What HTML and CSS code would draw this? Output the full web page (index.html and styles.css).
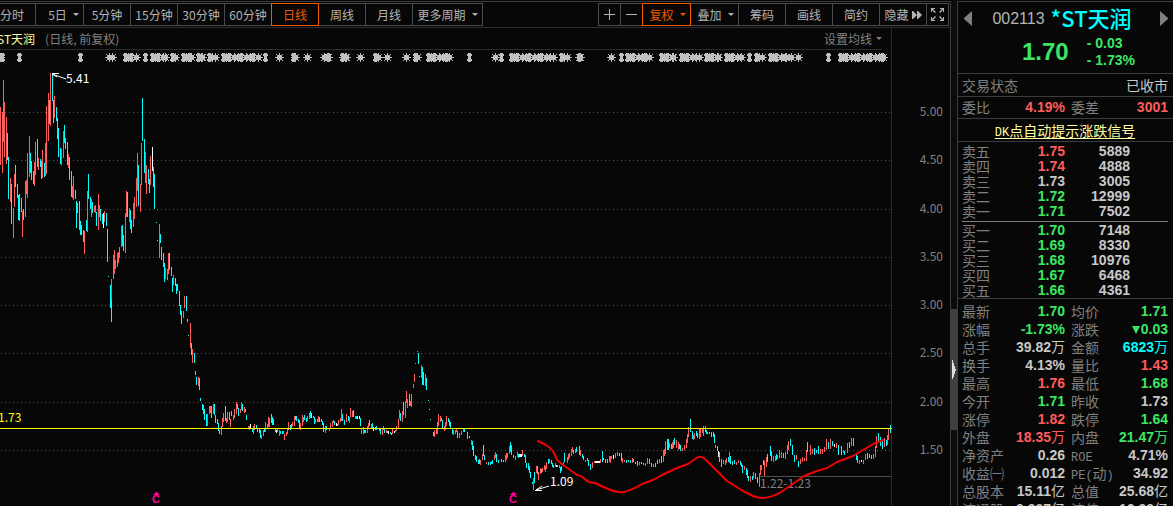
FILE: index.html
```html
<!DOCTYPE html>
<html lang="zh-CN">
<head>
<meta charset="utf-8">
<title>*ST天润 002113</title>
<link rel="stylesheet" href="styles.css">
</head>
<body>
<div class="app">
  <main class="chart-panel">
    <nav class="toolbar">
      <div class="group group-left">
        <button class="tab">分时</button>
        <button class="tab tab-menu">5日<span class="caret"></span></button>
        <button class="tab">5分钟</button>
        <button class="tab">15分钟</button>
        <button class="tab">30分钟</button>
        <button class="tab">60分钟</button>
        <button class="tab active">日线</button>
        <button class="tab">周线</button>
        <button class="tab">月线</button>
        <button class="tab tab-more">更多周期<span class="caret"></span></button>
      </div>
      <div class="group">
        <button class="tab tab-icon" aria-label="放大"><svg width="11" height="11" viewBox="0 0 11 11"><path d="M0 5h11v1H0zM5 0h1v11H5z"/></svg></button>
        <button class="tab tab-icon" aria-label="缩小"><svg width="11" height="11" viewBox="0 0 11 11"><path d="M0 5h11v1H0z"/></svg></button>
        <button class="tab tab-drop active">复权<span class="caret"></span></button>
        <button class="tab tab-drop">叠加<span class="caret"></span></button>
        <button class="tab">筹码</button>
        <button class="tab">画线</button>
        <button class="tab">简约</button>
        <button class="tab tab-hide">隐藏<svg width="10" height="8" viewBox="0 0 10 8"><path d="M0 0h1l4 4-4 4H0zM5 0h1l4 4-4 4H5z"/></svg></button>
        <button class="tab tab-icon" aria-label="全屏"><svg width="13" height="13" viewBox="0 0 13 13"><path d="M0 0h4v1H2l3 3-1 1-3-3v2H0zM13 0v4h-1V2L9 5 8 4l3-3H9V0zM0 13V9h1v2l3-3 1 1-3 3h2v1zM13 13H9v-1h2L8 9l1-1 3 3V9h1z"/></svg></button>
      </div>
    </nav>
    <div class="info">
      <div class="info-bar">
        <span class="info-name">ST天润</span>
        <span class="info-period">(日线, 前复权)</span>
        <button class="ma-button">设置均线<span class="caret"></span></button>
      </div>
    </div>
    <svg class="chart" viewBox="0 50 950 456" role="img" aria-label="日线走势图">
      <path class="grid" d="M1 112.5H893M1 160.5H893M1 209.5H893M1 257.5H893M1 305.5H893M1 353.5H893M1 402.5H893M1 450.5H893"/>
      <path class="axis-line" d="M891 50h1v456h-1z"/>
      <g class="axis">
        <text x="943" y="116">5.00</text><text x="943" y="164">4.50</text><text x="943" y="213">4.00</text><text x="943" y="261">3.50</text>
        <text x="943" y="309">3.00</text><text x="943" y="357">2.50</text><text x="943" y="406">2.00</text><text x="943" y="454">1.50</text>
      </g>
      <path id="events" class="events"/>
      <path id="up" class="up"/>
      <path id="down" class="down"/>
      <path id="flat" class="flat"/>
      <path class="support" d="M760 476h131v1H760z"/>
      <text class="support-text" x="760" y="488">1.22-1.23</text>
      <path class="price-line" d="M0 428h892v1H0z"/>
      <text class="price-text" x="-2" y="422">1.73</text>
      <path class="arrow" d="M52 74L66 79M52 73.5h7M52 74l5 3M536 490L549 486M535 490.5h7M536 490l6-4"/>
      <text class="mark" x="66" y="83">5.41</text>
      <text class="mark" x="550" y="486">1.09</text>
      <path class="wave" d="M538 441L546 445Q552 449 554 453L557 460L563 465L573 472L577 475Q581 475 587 481Q591 483 595 483L608 489Q618 493 624 492Q632 490 642 484L653 480L662 475L677 468L688 464L698 457Q702 456 705 459L712 466L727 481L743 491L753 496Q758 498 763 498Q775 497 784 490L797 481L804 476L817 471L827 468L837 462L853 456L863 450L875 443L883 440"/>
      <g class="badge">
        <path d="M156 492h1l3 3h-7zM513 492h1l3 3h-7z"/>
        <text x="156" y="503">C</text><text x="513" y="503">C</text>
      </g>
    </svg>
  </main>
  <div class="splitter"><button class="thumb" aria-label="收起侧栏"><svg width="4" height="19" viewBox="0 0 4 19"><path d="M0 0h1v3h1v3h1v3h1v2H3v3H2v3H1v2H0z"/></svg></button></div>
  <aside class="side">
    <header class="quote">
      <div class="quote-title">
        <button class="nav-button" aria-label="上一只"><svg width="8" height="15" viewBox="0 0 8 15"><path d="M8 0v15L0 8V7z"/></svg></button>
        <h1 class="stock"><span class="code">002113</span><span class="name">*ST天润</span></h1>
        <button class="nav-button" aria-label="下一只"><svg width="8" height="15" viewBox="0 0 8 15"><path d="M0 0v15l8-7V7z"/></svg></button>
      </div>
      <div class="quote-price"><span class="last">1.70</span><span class="change">- 0.03<br>- 1.73%</span></div>
    </header>
    <div class="line status"><span>交易状态</span><span class="status-value">已收市</span></div>
    <table class="pairs ratio"><tr><th>委比</th><td class="r">4.19%</td><th>委差</th><td class="r">3001</td></tr></table>
    <div class="line promo"><a href="#"><span class="latin">DK</span>点自动提示涨跌信号</a></div>
    <div class="book">
      <table class="asks">
        <tr><th>卖五</th><td class="r">1.75</td><td>5889</td></tr>
        <tr><th>卖四</th><td class="r">1.74</td><td>4888</td></tr>
        <tr><th>卖三</th><td>1.73</td><td>3005</td></tr>
        <tr><th>卖二</th><td class="g">1.72</td><td>12999</td></tr>
        <tr><th>卖一</th><td class="g">1.71</td><td>7502</td></tr>
      </table>
      <table class="bids">
        <tr><th>买一</th><td class="g">1.70</td><td>7148</td></tr>
        <tr><th>买二</th><td class="g">1.69</td><td>8330</td></tr>
        <tr><th>买三</th><td class="g">1.68</td><td>10976</td></tr>
        <tr><th>买四</th><td class="g">1.67</td><td>6468</td></tr>
        <tr><th>买五</th><td class="g">1.66</td><td>4361</td></tr>
      </table>
    </div>
    <table class="pairs details">
      <tr><th>最新</th><td class="g">1.70</td><th>均价</th><td class="g">1.71</td></tr>
      <tr><th>涨幅</th><td class="g">-1.73%</td><th>涨跌</th><td class="g"><span class="fall"></span>0.03</td></tr>
      <tr><th>总手</th><td>39.82<i>万</i></td><th>金额</th><td class="c">6823<i>万</i></td></tr>
      <tr><th>换手</th><td>4.13%</td><th>量比</th><td class="r">1.43</td></tr>
      <tr><th>最高</th><td class="r">1.76</td><th>最低</th><td class="g">1.68</td></tr>
      <tr><th>今开</th><td class="g">1.71</td><th>昨收</th><td>1.73</td></tr>
      <tr><th>涨停</th><td class="r">1.82</td><th>跌停</th><td class="g">1.64</td></tr>
      <tr><th>外盘</th><td class="r">18.35<i>万</i></td><th>内盘</th><td class="g">21.47<i>万</i></td></tr>
      <tr><th>净资产</th><td>0.26</td><th><span class="latin">ROE</span></th><td>4.71%</td></tr>
      <tr><th>收益㈠</th><td>0.012</td><th><span class="latin">PE(</span>动<span class="latin">)</span></th><td>34.92</td></tr>
      <tr><th>总股本</th><td>15.11<i>亿</i></td><th>总值</th><td>25.68<i>亿</i></td></tr>
      <tr><th>流通股</th><td>9.997<i>亿</i></td><th>流值</th><td>16.99<i>亿</i></td></tr>
    </table>
  </aside>
</div>
<script src="chart.js"></script>
</body>
</html>
```
FILE: styles.css
```css
* { box-sizing: border-box; }
body {
  margin: 0;
  height: 100vh;
  overflow: hidden;
  background: #070707;
  color: #c8c8c8;
  font: 12px/16px "Noto Sans CJK SC", sans-serif;
}
button {
  margin: 0;
  padding: 0;
  border: 0;
  background: none;
  color: inherit;
  font: inherit;
  white-space: nowrap;
}
svg { display: block; fill: currentColor; }
.app { display: flex; height: 100%; padding-top: 1px; overflow: hidden; }

.chart-panel { flex: 1; min-width: 0; border-top: 1px solid #3c3c3c; }
.toolbar {
  display: flex;
  justify-content: space-between;
  padding: 1px 1px 1px 0;
  border-bottom: 1px solid #2c2c2c;
  overflow: hidden;
}
.group { display: flex; }
.group-left { margin-left: -11px; }
.tab {
  display: flex;
  align-items: center;
  justify-content: center;
  gap: 6px;
  width: 48px;
  height: 23px;
  margin-left: -1px;
  border: 1px solid #4b4b4b;
  color: #b4b4b4;
}
.tab-menu { width: 49px; padding-left: 8px; }
.tab-drop { width: 49px; padding-left: 2px; }
.tab-more { width: 71px; }
.tab-icon { width: 23px; }
.tab-hide { gap: 3px; }
.tab.active { position: relative; border-color: #f25a00; color: #f25a00; }
.caret {
  border: 3px solid transparent;
  border-top-color: currentColor;
  border-bottom: 0;
}
.info { margin-right: 58px; border-right: 1px solid #2c2c2c; }
.info-bar {
  display: flex;
  align-items: center;
  height: 22px;
  margin-right: 9px;
  border-bottom: 1px solid #2c2c2c;
}
.info-name { margin-left: -3px; color: #ffffa0; }
.info-period { margin-left: 10px; color: #808080; }
.ma-button { display: flex; align-items: center; gap: 4px; margin-left: auto; color: #808080; }

.chart { width: 100%; height: auto; font-size: 12px; }
.grid { fill: none; stroke: #505050; stroke-dasharray: 1 3; shape-rendering: crispEdges; }
.axis-line { fill: #2c2c2c; }
.axis { fill: #808080; text-anchor: end; }
.events { fill: #c0c0c0; shape-rendering: crispEdges; }
.up { fill: #ff5c5c; shape-rendering: crispEdges; }
.down { fill: #00ffff; shape-rendering: crispEdges; }
.flat { fill: #ffffff; shape-rendering: crispEdges; }
.support { fill: #505050; }
.support-text { fill: #808080; }
.price-line { fill: #ffff00; }
.price-text { fill: #ffff00; }
.arrow { fill: none; stroke: #ffffff; }
.mark { fill: #ffffff; }
.wave { fill: none; stroke: #f00000; stroke-width: 2; stroke-linejoin: round; stroke-linecap: round; }
.badge { fill: #ff0096; font: bold 11px "Liberation Sans", sans-serif; text-anchor: middle; }

.splitter { width: 7px; padding-top: 308px; border-left: 1px solid #3c3c3c; background: #0c0c0c; }
.thumb {
  display: flex;
  align-items: center;
  justify-content: center;
  width: 6px;
  height: 121px;
  background: #404040;
  color: #e0e0e0;
}

.side { width: 216px; border: 1px solid #3c3c3c; border-width: 1px 0 0 1px; font-size: 14px; }
.quote { padding-bottom: 4px; border-bottom: 1px solid #3c3c3c; }
.quote-title {
  display: flex;
  align-items: center;
  justify-content: space-between;
  height: 33px;
  padding: 0 5px 0 6px;
}
.nav-button { color: #808080; }
.stock { display: flex; align-items: center; gap: 6px; margin: 0; padding-right: 8px; font-weight: normal; }
.code { color: #b4b4b4; font: 16px/32px "Liberation Sans", sans-serif; }
.name { padding-bottom: 4px; color: #00ffff; font-size: 22px; font-weight: 500; line-height: 28px; }
.quote-price {
  display: flex;
  align-items: center;
  gap: 18px;
  padding-left: 64px;
  color: #3ce664;
  font-family: "Liberation Sans", sans-serif;
  font-weight: bold;
}
.last { font-size: 24px; line-height: 34px; }
.change { font-size: 14px; line-height: 17px; }
.line {
  display: flex;
  align-items: center;
  justify-content: space-between;
  height: 23px;
  padding: 0 5px 0 4px;
  border-bottom: 1px solid #3c3c3c;
  color: #808080;
}
.status-value { color: #c8c8c8; }
.promo { justify-content: center; }
.promo a { color: #ffffa0; text-underline-offset: 2px; }
.latin { font-family: "Liberation Mono", monospace; font-size: 12px; line-height: 1px; }

table { width: 100%; border-collapse: separate; border-spacing: 0; table-layout: fixed; }
th, td { padding: 0; white-space: nowrap; }
th { color: #808080; font-weight: normal; text-align: left; }
td { font-family: "Liberation Sans", "Noto Sans CJK SC", sans-serif; font-weight: bold; text-align: right; }
td i { font-style: normal; font-weight: normal; line-height: 1px; }
.r { color: #ff5c5c; }
.g { color: #3ce664; }
.c { color: #00ffff; }
.pairs { padding: 0 5px 0 4px; }
.pairs th { width: 47px; padding-left: 6px; }
.pairs th:first-child { width: 42px; padding-left: 0; }
.pairs td { width: 61px; }
.pairs td:last-child { width: auto; }
.ratio { border-bottom: 1px solid #3c3c3c; line-height: 21px; }
.book { padding: 2px 5px 0 4px; border-bottom: 1px solid #3c3c3c; line-height: 15px; }
.book th { width: 42px; }
.book td { width: 61px; }
.book td:last-child { width: auto; padding-right: 38px; }
.asks { padding-bottom: 2px; border-bottom: 1px solid #808080; }
.bids { padding-top: 1px; }
.details { padding-top: 3px; line-height: 18px; }
.details th, .details td { height: 18px; vertical-align: top; }
.fall {
  display: inline-block;
  margin-right: 1px;
  border: 4px solid transparent;
  border-top: 8px solid currentColor;
  border-bottom: 0;
}
```
FILE: chart.js
```js
// Daily bars: x, top, bottom
const up = `0,107,165 2,112,173 3,80,142 4,102,157 6,117,164 10,178,202 13,208,238 14,174,207 22,211,237 25,181,217 26,180,194 27,153,198 29,136,177 34,162,186 35,142,175 38,158,170 42,150,178 45,143,176 46,106,174 48,93,141 50,73,126 54,96,118 61,149,165 63,131,158 68,154,168 72,186,198 73,176,200 84,231,254 87,191,232 91,199,217 94,206,212 95,205,213 98,194,230 99,205,217 104,211,222
111,279,300 113,255,279 114,250,274 115,260,269 117,253,267 118,252,263 119,247,258 121,226,247 125,213,253 126,191,217 129,208,222 133,203,227 134,197,219 136,178,207 137,153,191 140,184,212 141,143,185 145,152,183 146,165,194 150,156,185 159,224,258 165,268,279 167,269,280 168,253,274 173,275,285 183,311,318 184,296,308 190,323,348 192,349,363 198,377,386
207,414,426 209,406,414 210,406,413 213,404,414 221,426,435 222,418,427 223,413,422 226,418,423 227,412,422 230,419,427 233,415,420 234,409,418 236,402,414 240,409,413 241,402,410 244,407,413 248,426,428 249,426,430 253,426,434 254,424,430 261,435,439 263,430,436 265,422,432 267,424,428 268,417,427 269,418,427 277,429,432 279,430,436 283,431,434 284,434,440 286,432,436 287,429,434 288,422,430 292,422,426 294,416,426
300,423,430 302,415,426 303,417,422 307,416,421 309,413,419 315,419,423 318,416,422 325,426,433 329,428,431 330,423,429 332,421,427 333,420,423 338,420,425 340,418,422 341,409,421 346,414,422 349,417,423 350,408,417 352,411,417 355,416,419 361,429,434 363,427,434 367,426,433 368,423,428 371,424,428 382,428,435 383,426,430 386,430,433 392,428,434 395,430,432 396,426,431 398,419,428 399,410,419
402,411,422 405,401,418 406,391,403 407,399,408 410,401,406 411,394,407 413,384,388 414,374,382 415,363,364 417,351,352 421,365,378 425,374,386 434,430,437 436,428,434 437,422,434 438,414,426 440,416,422 444,426,431 445,422,430 446,416,426 453,430,435 455,430,434 456,428,432 459,433,438 461,431,435 463,429,432 471,440,445 480,460,465 482,454,460 486,462,464 491,461,464 494,455,460 495,452,458
505,455,462 506,453,460 507,453,458 509,446,454 515,456,460 517,452,457 522,450,456 533,478,490 536,466,473 538,472,480 540,468,474 542,468,472 544,465,470 545,466,472 546,462,469 549,459,463 555,463,467 559,465,468 563,462,465 567,457,463 568,454,460 569,453,458 571,449,456 572,447,452 575,449,453 580,450,456 585,460,462 592,462,468 594,461,463
600,459,463 609,456,462 610,456,463 611,456,459 615,453,458 617,452,456 622,458,463 624,460,462 632,458,463 639,462,465 645,463,466 647,458,464 653,464,467 659,459,463 663,450,462 664,449,456 665,441,454 669,443,448 672,442,449 673,440,448 676,440,448 678,442,450 682,448,451 684,445,450 686,439,448 687,434,443 688,427,437 693,435,440 694,433,439 699,429,439 700,429,437 702,428,433 703,426,436
715,445,448 723,460,464 725,460,465 726,458,463 729,452,463 736,462,465 738,460,463 744,466,470 750,476,482 753,472,478 759,473,487 760,465,475 761,465,470 764,461,476 766,457,467 773,456,462 775,456,461 777,455,459 779,450,458 781,452,458 785,452,459 787,445,454 788,441,450 796,455,460 800,459,464 802,457,462 804,458,461 806,450,461 810,445,455 812,449,454 820,449,454 822,449,454 824,447,452 826,439,450 830,439,449 836,443,448 843,450,453 847,443,453 851,438,446 859,460,464 863,460,464 865,454,460 873,454,459 875,446,457 876,436,448 884,438,447 887,435,445 888,429,440`;

const down = `7,133,160 8,157,199 11,184,224 15,165,187 17,184,198 18,195,220 19,194,221 21,198,212 23,209,220 30,153,173 31,161,180 33,171,184 37,139,167 40,159,167 41,161,179 44,163,177 49,100,124 52,73,101 53,100,123 56,107,121 57,118,139 58,128,157 60,148,164 64,125,143 65,138,149 67,142,165 69,157,180 71,171,197 75,190,199 76,201,228 77,203,213 79,201,230 80,221,235 81,225,235 83,230,242 86,220,231 88,174,199 90,197,209 92,202,213 96,212,226 100,209,221 102,214,224 106,213,226 107,229,262 108,276,277 110,285,308 111,300,322
122,225,246 123,235,251 127,192,217 130,210,229 131,220,233 138,165,206 142,98,141 144,139,173 148,169,184 149,179,193 153,167,187 154,174,209 156,222,223 157,240,241 160,234,243 161,247,260 163,253,267 164,263,282 169,253,270 171,267,276 172,278,292 175,278,286 176,284,294 177,284,291 179,291,306 180,305,315 181,311,324 186,296,311 187,319,322 188,335,336 191,343,355 194,353,363 195,371,375 196,377,385 199,378,390
200,398,401 202,404,410 203,405,414 204,409,420 206,414,426 211,406,418 214,404,415 215,415,423 217,419,424 218,423,431 219,430,434 225,406,421 229,412,420 231,411,416 237,404,409 238,408,416 242,404,411 245,409,412 246,415,420 252,428,432 256,425,428 257,428,432 259,429,433 260,430,438 264,429,432 271,414,423 272,417,425 273,419,425 275,429,432 280,431,434 282,431,434 290,425,430 291,424,428 295,416,420 296,416,421 298,419,423 299,420,429
304,415,420 306,418,422 310,411,418 313,416,418 314,417,424 317,419,422 319,417,422 321,419,422 322,421,425 323,423,432 326,426,430 334,421,425 337,424,426 342,414,421 344,420,425 348,416,421 353,410,417 356,416,419 360,418,426 364,430,433 365,430,433 369,420,426 372,423,428 375,427,430 376,426,430 379,429,431 380,429,434 384,428,433 387,431,433 390,432,434 391,433,435
400,413,421 403,402,415 409,394,406 418,353,364 419,376,377 422,367,385 423,372,385 426,378,390 428,400,401 429,409,410 430,419,420 433,432,436 441,418,421 442,420,428 448,418,422 449,420,426 450,422,429 452,429,434 457,431,438 464,428,432 467,432,439 469,436,438 472,441,450 473,446,456 475,455,460 476,456,462 478,460,464 479,459,464 483,445,456 484,455,460 488,462,465 490,462,465 492,460,464 496,454,462 498,460,463
501,459,462 503,460,462 510,442,452 511,445,455 513,455,458 518,454,458 524,454,457 525,455,463 526,463,468 528,463,470 529,466,473 530,472,478 532,482,484 534,472,483 537,466,474 541,469,473 548,459,464 551,460,464 552,463,467 553,465,468 557,465,467 560,467,473 561,466,471 564,453,462 573,450,454 576,447,452 579,446,455 582,454,458 583,456,460 587,458,461 588,460,466 590,464,470
602,451,462 603,458,460 605,459,463 607,459,463 619,453,456 621,453,461 626,460,463 628,460,462 630,460,463 633,459,462 635,462,464 637,461,466 641,462,464 643,463,465 649,459,464 651,463,467 655,463,467 657,460,464 661,456,463 667,439,450 668,439,450 671,444,449 674,438,445 679,444,449 680,445,451 690,419,432 692,431,439 696,431,436 697,433,438 705,426,432 706,430,434 707,432,434 709,432,434 711,432,437 713,432,437 714,434,443 717,446,451 719,452,462
721,459,467 728,457,462 730,456,464 732,461,465 734,460,464 740,461,465 741,463,467 742,465,473 746,468,475 747,470,478 748,476,481 752,476,480 755,473,479 757,477,483 763,460,465 767,454,462 770,446,456 771,451,461 776,454,460 783,453,458 790,439,446 792,445,455 794,455,462 798,461,467 807,442,452 814,448,455 816,450,453 818,446,454 828,442,449 832,441,446 838,445,455 841,446,455 844,451,455 849,442,448 853,438,446 856,453,460 857,456,463 867,453,459 869,454,458 871,455,459 878,433,441 880,437,446 882,440,449 886,440,446 890,425,433`;

const flat = `103,213,228 152,147,171 250,424,428 276,430,433 311,413,418 336,423,426 357,416,419 359,416,419 373,427,431 388,431,434 394,431,433 519,454,457 520,454,457 521,454,457 556,465,467 596,461,463 597,461,463 599,461,463 595,461,463 598,461,463 613,455,459 718,451,457 834,444,447 861,460,462`;

const bars = text => text.trim().split(/\s+/).map(item => {
  const [x, top, bottom] = item.split(",");
  return `M${x} ${top}h1V${bottom}h-1z`;
}).join("");

document.getElementById("up").setAttribute("d", bars(up));
document.getElementById("down").setAttribute("d", bars(down));
document.getElementById("flat").setAttribute("d", bars(flat));

// Event markers along the top of the chart
const box = (x, y, w, h) => `M${x} ${y}h${w}v${h}h${-w}z`;
const knot = x => box(x - 1, 53, 3, 9) + box(x - 2, 54, 5, 2) + box(x - 2, 59, 5, 2);
const star = x => box(x - 4, 57, 9, 1) + box(x, 53, 1, 9) + box(x - 2, 56, 5, 3) + box(x - 1, 55, 3, 5)
  + [-3, 3].map(d => box(x + d, 54, 1, 1) + box(x + d, 60, 1, 1)).join("")
  + [-2, 2].map(d => box(x + d, 55, 1, 1) + box(x + d, 59, 1, 1)).join("");

const knots = [2, 19, 80, 145, 265, 469, 501, 621, 749, 828];
const stars = [0, 109, 112, 279, 307, 324, 343, 360, 387, 406, 495, 579, 611, 791, 798];
const runs = [[123, 140], [150, 169], [170, 179], [181, 195], [196, 206], [207, 219], [221, 262], [291, 299], [326, 332], [340, 350], [373, 382], [413, 421], [426, 453], [509, 557], [559, 571], [577, 584], [625, 653], [659, 677], [679, 703], [704, 722], [724, 745], [754, 766], [768, 790], [838, 887]];

let marks = knots.map(knot).join("") + stars.map(star).join("");
for (const [from, to] of runs) {
  marks += knot(from + 2) + star(to - 4);
  for (let x = from + 5, i = 0; x < to - 4; x += 3 + (i * 2) % 3, i++) marks += i % 3 === 1 ? knot(x) : star(x);
}
document.getElementById("events").setAttribute("d", marks);
```
